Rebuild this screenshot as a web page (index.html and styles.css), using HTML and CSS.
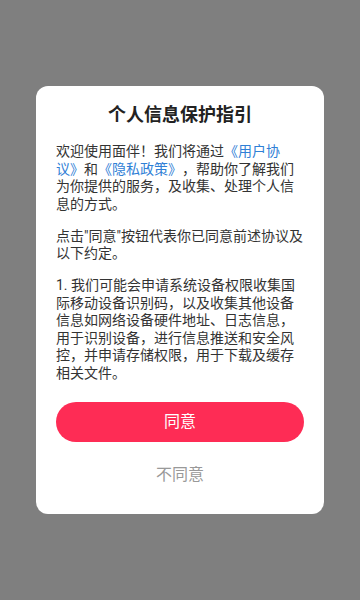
FILE: index.html
```html
<!DOCTYPE html>
<html lang="zh-CN">
<head>
<meta charset="utf-8">
<meta name="viewport" content="width=360, initial-scale=1">
<title>个人信息保护指引</title>
<link rel="stylesheet" href="styles.css">
</head>
<body>
<div class="screen">
  <div class="dialog">
    <h1 class="title">个人信息保护指引</h1>
    <div class="content">
      <p class="para">欢迎使用面伴！我们将通过<span class="link">《用户协议》</span>和<span class="link">《隐私政策》</span>，帮助你了解我们为你提供的服务，及收集、处理个人信息的方式。</p>
      <p class="para">点击"同意"按钮代表你已同意前述协议及以下约定。</p>
      <p class="para">1. 我们可能会申请系统设备权限收集国际移动设备识别码，以及收集其他设备信息如网络设备硬件地址、日志信息，用于识别设备，进行信息推送和安全风控，并申请存储权限，用于下载及缓存相关文件。</p>
    </div>
    <button class="btn-agree" type="button">同意</button>
    <button class="btn-disagree" type="button">不同意</button>
  </div>
</div>
</body>
</html>
```

FILE: styles.css
```css
html, body {
  margin: 0;
  padding: 0;
}
body {
  background: #7f7f7f;
  font-family: Roboto, "Noto Sans CJK SC", sans-serif;
}
.screen {
  width: 360px;
  height: 600px;
  padding-top: 86px;
  box-sizing: border-box;
}
.dialog {
  margin: 0 36px;
  width: 288px;
  box-sizing: border-box;
  background: #ffffff;
  border-radius: 12px;
  padding: 17px 20px 17px;
  display: flex;
  flex-direction: column;
}
.title {
  margin: 0;
  font-size: 18px;
  line-height: 24px;
  font-weight: 700;
  color: #222222;
  text-align: center;
}
.content {
  margin-top: 16px;
  margin-right: -2px;
  display: flex;
  flex-direction: column;
  gap: 14.5px;
}
.para {
  margin: 0;
  font-size: 14px;
  line-height: 17.5px;
  color: #333333;
  text-spacing-trim: space-all;
  word-break: break-all;
}
.link {
  color: #2f80d6;
}
.btn-agree {
  margin-top: 20px;
  height: 40px;
  border: none;
  border-radius: 20px;
  background: #fe2c55;
  color: #ffffff;
  font-family: inherit;
  font-size: 16px;
  line-height: 40px;
  padding: 0;
}
.btn-disagree {
  margin-top: 11px;
  height: 44px;
  border: none;
  background: transparent;
  color: #999999;
  font-family: inherit;
  font-size: 16px;
  line-height: 44px;
  padding: 0;
}
```
